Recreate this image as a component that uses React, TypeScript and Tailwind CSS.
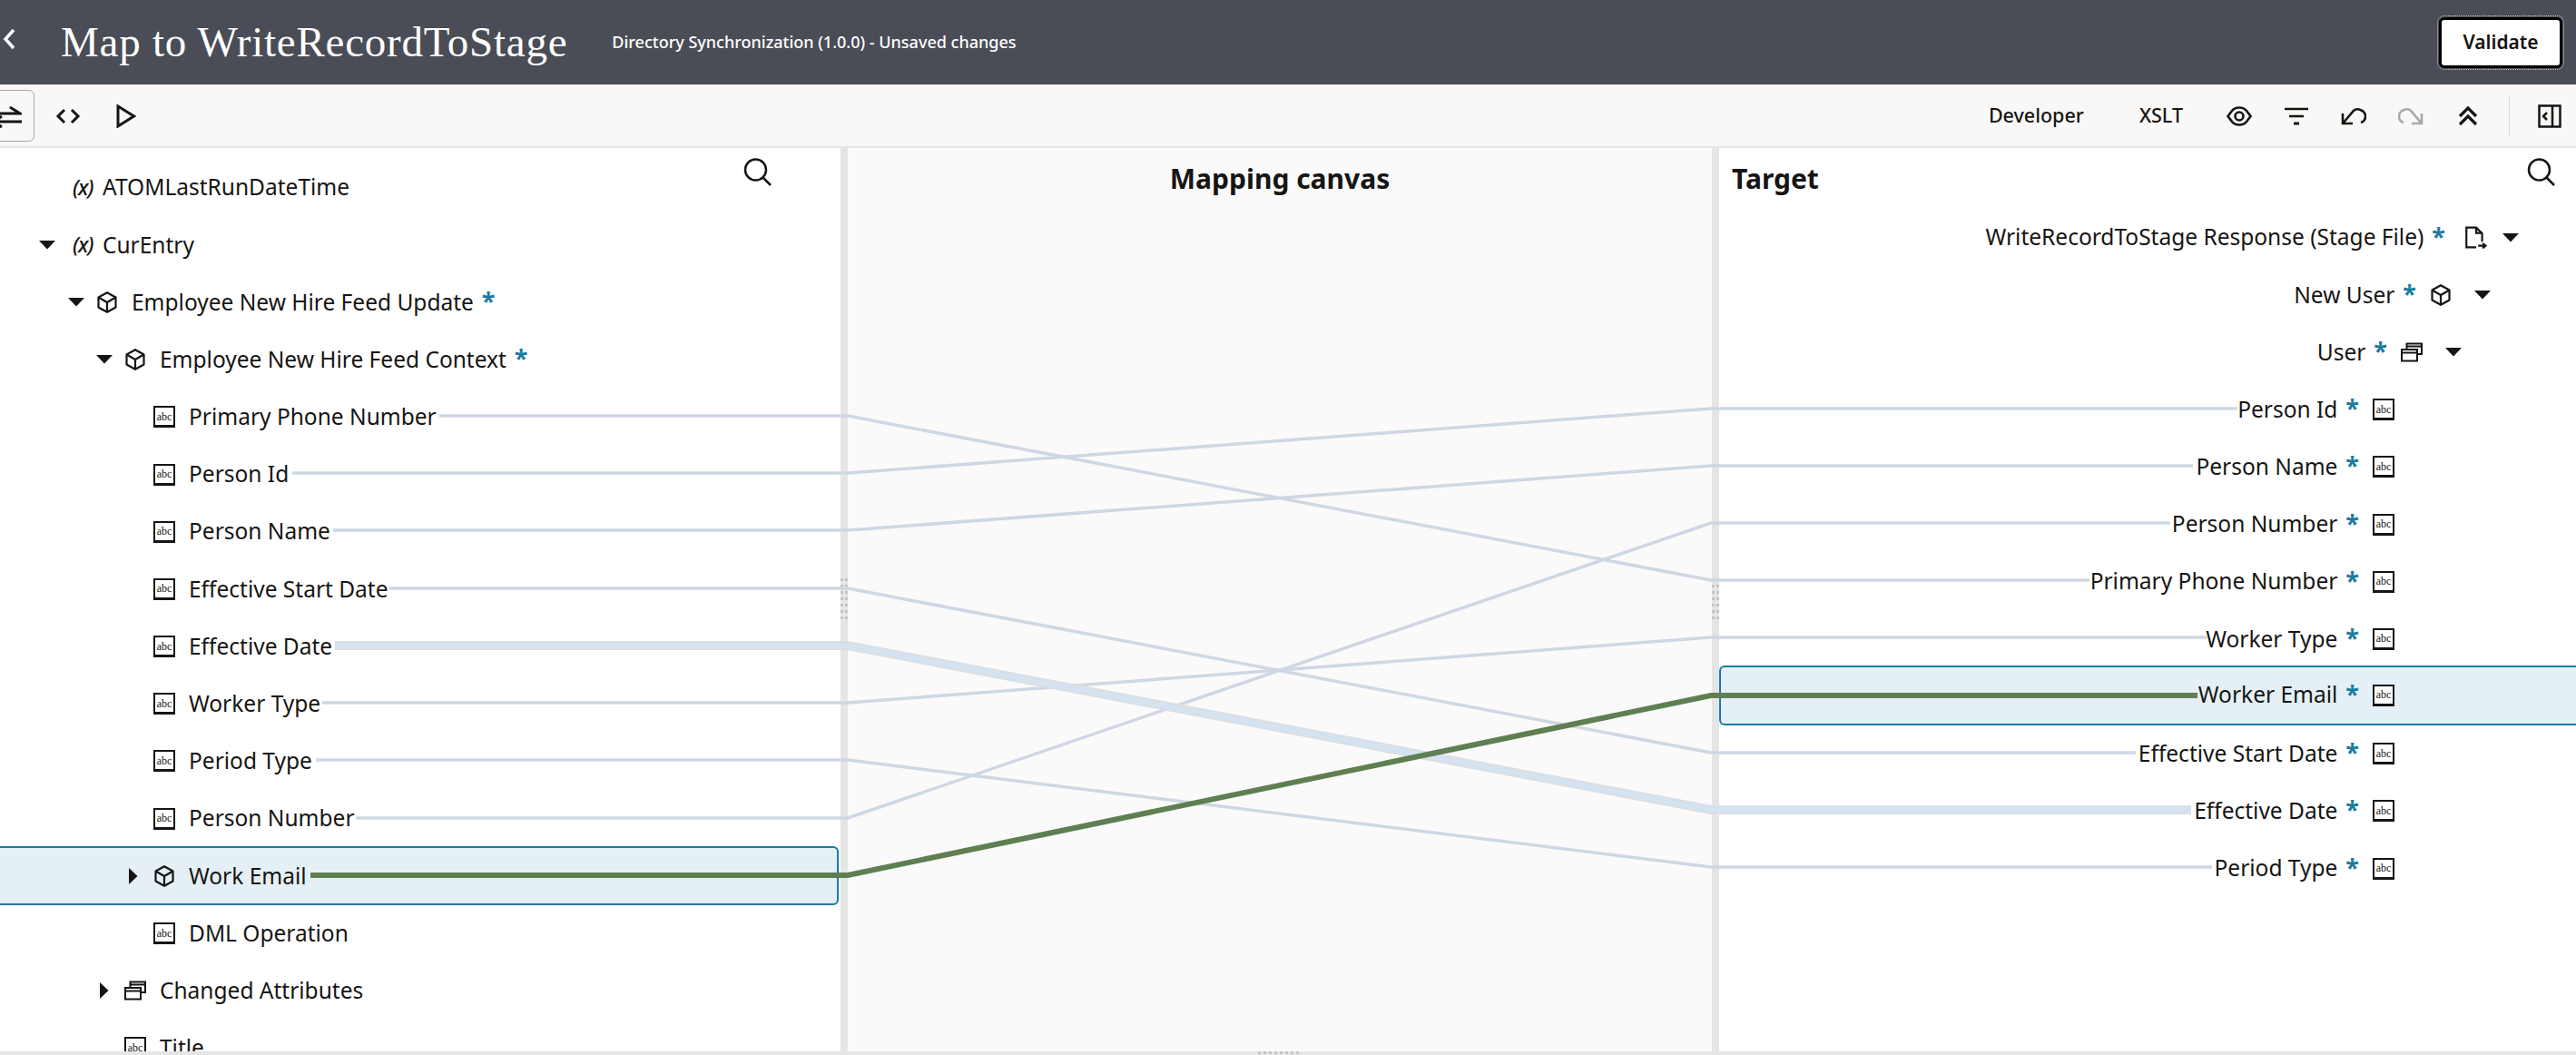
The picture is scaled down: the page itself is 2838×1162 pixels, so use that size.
import type { ReactNode } from "react"

const sans = "font-['Noto_Sans','Open_Sans',sans-serif]"

function Caret({ dir }: { dir: "down" | "right" }) {
    return (
        <svg width="24" height="24" viewBox="0 0 24 24" fill="#161513" className="shrink-0">
            {dir === "down" ? <path d="M3 7 H21 L12 16.5 Z" /> : <path d="M7 3 L16.5 12 L7 21 Z" />}
        </svg>
    )
}

function Cube() {
    return (
        <svg width="24" height="24" viewBox="0 0 24 24" fill="none" stroke="#161513" strokeWidth="2.2" strokeLinejoin="round" className="shrink-0">
            <path d="M12 1.2 L21.5 6.5 V17.5 L12 22.8 L2.5 17.5 V6.5 Z" />
            <path d="M2.5 6.5 L12 12 L21.5 6.5 M12 12 V22.8" />
        </svg>
    )
}

function Stack() {
    return (
        <svg width="24" height="24" viewBox="0 0 24 24" fill="none" stroke="#161513" strokeWidth="2" className="shrink-0">
            <path d="M6.5 8 V2.5 H23 V14 H18" />
            <path d="M6.5 5.5 H23" />
            <rect x="1" y="9" width="17" height="12.5" />
            <path d="M1 12.5 H18" />
        </svg>
    )
}

function Doc() {
    return (
        <svg width="26" height="26" viewBox="0 0 24 24" fill="none" stroke="#161513" strokeWidth="2" className="shrink-0">
            <path d="M13 21.5 H3 V1.5 H13 L19 7.5 V16" />
            <path d="M13 1.5 V7 H19" />
            <path d="M15 20 H22 M19.5 17.5 L22.5 20 L19.5 22.5" />
        </svg>
    )
}

function Abc() {
    return (
        <div className="flex h-6 w-6 shrink-0 items-center justify-center border-2 border-b-[3px] border-[#161513] bg-white font-['Liberation_Serif',serif] text-[12px] leading-none text-[#161513]">
            abc
        </div>
    )
}

function X() {
    return <span className="block w-6 shrink-0 translate-x-[6px] text-[23px] font-medium italic leading-none tracking-[-1px] whitespace-nowrap text-[#161513]">(x)</span>
}

function Star() {
    return <span className="text-[27px] font-bold leading-none text-[#1b7b9e]">*</span>
}

function Search() {
    return (
        <svg width="32" height="32" viewBox="0 0 32 32" fill="none" stroke="#161513" strokeWidth="2.5">
            <circle cx="13.5" cy="13" r="11.5" />
            <path d="M21.5 21.5 L30 30" />
        </svg>
    )
}

function Grip({ cols, rows }: { cols: number; rows: number }) {
    return (
        <div className={cols === 2 ? "grid grid-cols-2 gap-x-[2px] gap-y-[4px]" : "grid grid-cols-8 gap-x-[3px]"}>
            {Array.from({ length: cols * rows }).map((_, i) => (
                <div key={i} className="h-[3px] w-[3px] bg-[#c4c4c4]" />
            ))}
        </div>
    )
}

function Divider({ gripTop }: { gripTop: string }) {
    return (
        <div className="relative w-2 shrink-0 bg-[#e5e5e5]">
            <div className={`absolute left-0 ${gripTop}`}>
                <Grip cols={2} rows={7} />
            </div>
        </div>
    )
}

type LeftRow = {
    label: string
    indent: string
    caret?: "down" | "right"
    icon: ReactNode
    star?: boolean
    selected?: boolean
}

const leftRows: LeftRow[] = [
    { label: "ATOMLastRunDateTime", indent: "pl-[40px]", icon: <X /> },
    { label: "CurEntry", indent: "pl-[40px]", caret: "down", icon: <X /> },
    { label: "Employee New Hire Feed Update", indent: "pl-[72px]", caret: "down", icon: <Cube />, star: true },
    { label: "Employee New Hire Feed Context", indent: "pl-[103px]", caret: "down", icon: <Cube />, star: true },
    { label: "Primary Phone Number", indent: "pl-[135px]", icon: <Abc /> },
    { label: "Person Id", indent: "pl-[135px]", icon: <Abc /> },
    { label: "Person Name", indent: "pl-[135px]", icon: <Abc /> },
    { label: "Effective Start Date", indent: "pl-[135px]", icon: <Abc /> },
    { label: "Effective Date", indent: "pl-[135px]", icon: <Abc /> },
    { label: "Worker Type", indent: "pl-[135px]", icon: <Abc /> },
    { label: "Period Type", indent: "pl-[135px]", icon: <Abc /> },
    { label: "Person Number", indent: "pl-[135px]", icon: <Abc /> },
    { label: "Work Email", indent: "pl-[135px]", caret: "right", icon: <Cube />, selected: true },
    { label: "DML Operation", indent: "pl-[135px]", icon: <Abc /> },
    { label: "Changed Attributes", indent: "pl-[103px]", caret: "right", icon: <Stack /> },
    { label: "Title", indent: "pl-[103px]", icon: <Abc /> },
]

type RightRow = {
    label: string
    pad: string
    icon: ReactNode
    caret?: boolean
    iconGap?: string
    caretGap?: string
    selected?: boolean
}

const rightRows: RightRow[] = [
    { label: "WriteRecordToStage Response (Stage File)", pad: "pr-[60px]", icon: <Doc />, caret: true, iconGap: "ml-[20px]", caretGap: "ml-[14px]" },
    { label: "New User", pad: "pr-[91px]", icon: <Cube />, caret: true },
    { label: "User", pad: "pr-[123px]", icon: <Stack />, caret: true },
    { label: "Person Id", pad: "pr-[200px]", icon: <Abc /> },
    { label: "Person Name", pad: "pr-[200px]", icon: <Abc /> },
    { label: "Person Number", pad: "pr-[200px]", icon: <Abc /> },
    { label: "Primary Phone Number", pad: "pr-[200px]", icon: <Abc /> },
    { label: "Worker Type", pad: "pr-[200px]", icon: <Abc /> },
    { label: "Worker Email", pad: "pr-[200px]", icon: <Abc />, selected: true },
    { label: "Effective Start Date", pad: "pr-[200px]", icon: <Abc /> },
    { label: "Effective Date", pad: "pr-[200px]", icon: <Abc /> },
    { label: "Period Type", pad: "pr-[200px]", icon: <Abc /> },
]

// x1, y1 on the source side, y2, x2 on the target side
const links = [
    [484, 458, 639, 2302],
    [322, 521, 450, 2465],
    [367, 584, 513, 2416],
    [429, 648, 829, 2353],
    [355, 774, 702, 2431],
    [348, 837, 955, 2437],
    [392, 901, 576, 2391],
]

function linkPath(x1: number, y1: number, y2: number, x2: number) {
    return `M${x1} ${y1} H934 L1885 ${y2} H${x2}`
}

function ToolIcon({ children, className = "" }: { children: ReactNode; className?: string }) {
    return (
        <svg width="28" height="28" viewBox="0 0 28 28" fill="none" stroke="currentColor" strokeWidth="2.6" className={className}>
            {children}
        </svg>
    )
}

export default function App() {
    return (
        <div className={`flex h-[1162px] w-[2838px] flex-col overflow-hidden bg-white text-[#161513] ${sans}`}>
            {/* Title bar */}
            <header className="flex h-[93px] shrink-0 items-center bg-[#4a4d55] pr-[13px] text-white">
                <svg width="14" height="24" viewBox="0 0 14 24" fill="none" stroke="white" strokeWidth="3.5" className="ml-[3px] -mt-[8px]">
                    <path d="M12 2 L3 12 L12 22" />
                </svg>
                <h1 className="ml-[50px] font-['Liberation_Serif',serif] text-[47px] font-normal leading-none tracking-[0.75px] whitespace-nowrap">
                    Map to WriteRecordToStage
                </h1>
                <span className="ml-[49px] text-[18px] font-medium whitespace-nowrap">
                    Directory Synchronization (1.0.0) - Unsaved changes
                </span>
                <div className="ml-auto rounded-[8px] border border-dotted border-[#c8c8c8] p-[1px]">
                    <button className="flex h-[56px] w-[136px] items-center justify-center rounded-[6px] border-[3px] border-black bg-white text-[21px] font-semibold text-[#161513]">
                        Validate
                    </button>
                </div>
            </header>

            {/* Toolbar */}
            <div className="flex h-[70px] shrink-0 items-center border-t border-b-2 border-t-[#e8e4d8] border-b-[#e5e5e5] bg-[#f9f8f6]">
                <button className="-ml-[20px] flex h-[57px] w-[58px] items-center justify-end rounded-[6px] border border-[#a8a8a8] pr-[13px]">
                    <svg width="34" height="26" viewBox="0 0 34 26" fill="none" stroke="#161513" strokeWidth="3">
                        <path d="M0 10 H32 L21 3" />
                        <path d="M34 19 H3 M12 13 L3 19 L12 25" />
                    </svg>
                </button>
                <svg width="28" height="18" viewBox="0 0 28 18" fill="none" stroke="#161513" strokeWidth="3" className="ml-[23px]">
                    <path d="M10 2 L3 9 L10 16 M18 2 L25 9 L18 16" />
                </svg>
                <svg width="22" height="26" viewBox="0 0 22 26" fill="none" stroke="#161513" strokeWidth="3" className="ml-[39px]">
                    <path d="M2 2 L19.5 13 L2 24 Z" />
                </svg>
                <div className="ml-auto flex items-center pr-[16px]">
                    <span className="text-[21.5px] font-medium">Developer</span>
                    <span className="ml-[61px] text-[21.5px] font-medium">XSLT</span>
                    <ToolIcon className="ml-[48px]">
                        <path d="M1.5 14 L6 8 C8 5.5 11 4.5 14 4.5 C17 4.5 20 5.5 22 8 L26.5 14 L22 20 C20 22.5 17 23.5 14 23.5 C11 23.5 8 22.5 6 20 Z" />
                        <circle cx="14" cy="14" r="4.5" />
                    </ToolIcon>
                    <ToolIcon className="ml-[35px]">
                        <path d="M1 6 H27 M6 14 H22" />
                        <path d="M11 22 H17" strokeWidth="3" />
                    </ToolIcon>
                    <ToolIcon className="ml-[35px]">
                        <path d="M2 11 V22 H13 M2 22 L14 8 C18 4 27 8 27 14 C27 17 25 20 22 21" />
                    </ToolIcon>
                    <ToolIcon className="ml-[35px] text-[#a9a9a9]">
                        <path d="M26 11 V22 H15 M26 22 L14 8 C10 4 1 8 1 14 C1 17 3 20 6 21" />
                    </ToolIcon>
                    <ToolIcon className="ml-[35px]">
                        <path d="M5 14 L14 5 L23 14 M5 23 L14 14 L23 23" strokeWidth="3.2" />
                    </ToolIcon>
                    <div className="ml-[31px] h-[46px] w-px bg-[#d8d8d8]" />
                    <svg width="26" height="26" viewBox="0 0 26 26" fill="none" stroke="#161513" strokeWidth="2.5" className="ml-[31px]">
                        <rect x="1.5" y="1.5" width="23" height="23" />
                        <path d="M16 1.5 V24.5 M10 9 L6 13 L10 17" />
                    </svg>
                </div>
            </div>

            {/* Mapper */}
            <div className="relative flex min-h-0 flex-1 overflow-hidden">
                <section className="relative w-[926px] shrink-0 overflow-hidden bg-white pt-[12px]">
                    <div className="absolute right-[75px] top-[11px]">
                        <Search />
                    </div>
                    {leftRows.map((r) => (
                        <div key={r.label} className="flex h-[63.2px] items-center">
                            <div className={`flex h-[65px] w-[924px] items-center ${r.indent} ${r.selected ? "-ml-2 w-[932px] rounded-[6px] border-2 border-[#1b7b9e] bg-[#e4f0f6]" : ""}`}>
                                <div className={r.selected ? "ml-[6px] flex items-center" : "flex items-center"}>
                                    <div className="w-6 shrink-0">{r.caret && <Caret dir={r.caret} />}</div>
                                    <div className="ml-[10px]">{r.icon}</div>
                                    <span className="ml-[15px] text-[24.5px] leading-none whitespace-nowrap">{r.label}</span>
                                    {r.star && (
                                        <span className="ml-[9px]">
                                            <Star />
                                        </span>
                                    )}
                                </div>
                            </div>
                        </div>
                    ))}
                </section>

                <Divider gripTop="top-[474px]" />

                <section className="flex flex-1 justify-center bg-[#fafafa] pt-[15px]">
                    <h2 className="text-[30px] font-bold leading-[38px]">Mapping canvas</h2>
                </section>

                <Divider gripTop="top-[474px]" />

                <section className="relative w-[944px] shrink-0 bg-white pt-[15px]">
                    <h2 className="ml-[14px] h-[52px] text-[30px] font-bold leading-[38px]">Target</h2>
                    <div className="absolute right-[22px] top-[11px]">
                        <Search />
                    </div>
                    {rightRows.map((r) => (
                        <div
                            key={r.label}
                            className={`flex items-center justify-end ${r.pad} ${r.selected ? "-mt-[3px] h-[66.2px] rounded-l-[6px] border-y-2 border-l-2 border-[#1b7b9e] bg-[#e4f0f6]" : "h-[63.2px]"}`}
                        >
                            <span className="text-[24.5px] leading-none whitespace-nowrap">{r.label}</span>
                            <span className="ml-[9px]">
                                <Star />
                            </span>
                            <div className={r.iconGap ?? "ml-[15px]"}>{r.icon}</div>
                            {r.caret && (
                                <div className={r.caretGap ?? "ml-[22px]"}>
                                    <Caret dir="down" />
                                </div>
                            )}
                        </div>
                    ))}
                </section>

                {/* Connections between source and target fields */}
                <svg className="pointer-events-none absolute left-0 top-0 h-[999px] w-[2838px]" viewBox="0 163 2838 999" fill="none">
                    {links.map(([x1, y1, y2, x2]) => (
                        <path key={y1} d={linkPath(x1, y1, y2, x2)} stroke="#cfd6e4" strokeWidth="3.5" />
                    ))}
                    <path d={linkPath(369, 711, 892, 2414)} stroke="#dcdfe2" strokeWidth="10" />
                    <path d={linkPath(369, 711, 892, 2414)} stroke="#d3e3f2" strokeWidth="6" />
                    <path d={linkPath(342, 964, 766, 2421)} stroke="#5f7f52" strokeWidth="6" />
                </svg>

                <div className="absolute bottom-0 left-0 flex h-1 w-full justify-start bg-[#e5e5e5] pl-[1386px]">
                    <Grip cols={8} rows={1} />
                </div>
            </div>
        </div>
    )
}
